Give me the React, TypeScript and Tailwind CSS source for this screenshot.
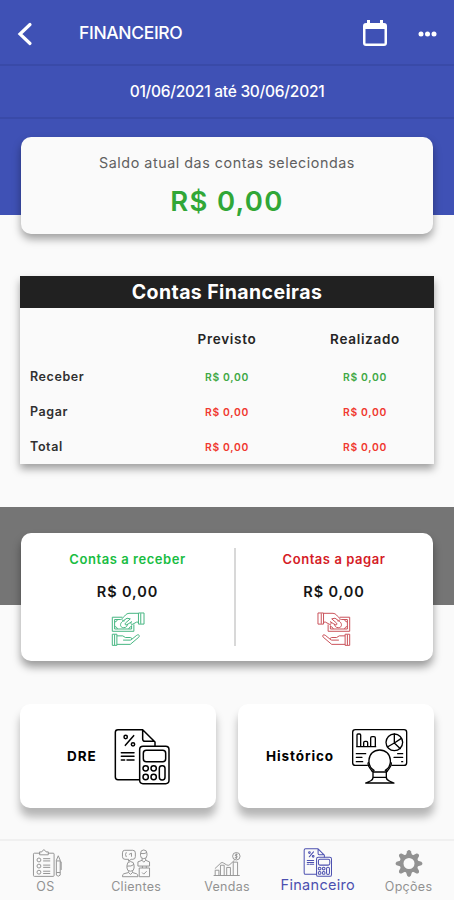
import { FC, ReactNode } from 'react'

type RowType = {
  label: string
  color: string
}

const rows: RowType[] = [
  { label: 'Receber', color: 'text-[#3fa845]' },
  { label: 'Pagar', color: 'text-[#f0382f]' },
  { label: 'Total', color: 'text-[#f0382f]' },
]

const ReportIcon: FC<{ className: string; strokeWidth?: number }> = ({
  className,
  strokeWidth = 4.5,
}) => (
  <svg
    className={className}
    viewBox="27 21 171 171"
    fill="none"
    stroke="currentColor"
    strokeWidth={strokeWidth}
    strokeLinecap="round"
    strokeLinejoin="round"
  >
    <path d="M103 176H39q-8 0-8-8V34q0-8 8-8h74l37 37v11M113 26v28q0 7 7 7h28" />
    <circle cx="62" cy="48" r="5" />
    <circle cx="84" cy="70" r="5" />
    <path d="M86 44 61 73" />
    <path d="M49 95h38M49 106h38M49 117h10M66 117h21" />
    <rect x="104" y="76" width="88" height="112" rx="10" />
    <rect x="115" y="88" width="67" height="34" rx="9" />
    <circle cx="122" cy="142" r="8" />
    <circle cx="146" cy="142" r="8" />
    <circle cx="122" cy="168" r="8" />
    <circle cx="146" cy="168" r="8" />
    <rect x="163" y="134" width="17" height="43" rx="8" />
  </svg>
)

const HistoryIcon: FC = () => (
  <svg
    className="h-[57px] w-[57px] text-black"
    viewBox="33 21 171 171"
    fill="none"
    stroke="currentColor"
    strokeWidth="4"
    strokeLinecap="round"
    strokeLinejoin="round"
  >
    <path d="M82 133H46q-8 0-8-8V34q0-8 8-8h146q8 0 8 8v91q0 8-8 8h-36" />
    <path d="M51 77V42q0-3 3-3h5q3 0 3 3v35M71 77V65q0-4 4-4h4q4 0 4 4v12M92 77V51q0-4 4-4h6q4 0 4 4v26M50 77h57" />
    <circle cx="163" cy="64" r="25" />
    <path d="M163 39v27l-21 12M163 66l21-14M163 66l18 17" />
    <path d="M49 98h28M49 109h17M49 122h19M173 98h15M162 109h26M185 122h3" />
    <path d="M102 148c-12-7-16-18-15-31 1-18 14-30 32-30s31 12 32 30c1 13-3 24-15 31" />
    <path d="M85 125c-5 10 7 17 12 27M153 125c5 10-7 17-12 27" />
    <path d="M100 153h38M100 169h38M99 149v20q0 8-8 11l-14 6h85l-14-6q-9-3-9-11v-20" />
  </svg>
)

const MoneyIcon: FC<{ className: string }> = ({ className }) => (
  <svg
    className={className}
    viewBox="33 19 102 104"
    fill="none"
    stroke="currentColor"
    strokeWidth="3"
    strokeLinejoin="round"
  >
    <path d="M67 35H36v43h66V57M62 42H43v29h52V60M43 50q7-1 9-8M43 63q7 1 9 8M95 63q-7 1-9 8" />
    <path d="M74 46c-15 1-18 21-3 21 8 0 12-6 11-12" />
    <path d="M115 23H87c-9 0-13 9-20 15-5 4 0 9 5 6l9-6 10 2-15 13c-3 4 1 7 5 5l15-10M94 51c-3 5 1 8 5 5l11-6h6" />
    <path d="M116 22h17v34h-17zM123 23v32" />
    <path d="M36 87h14v34H36zM43 88v32M50 92h18l8 5h15c6 0 6 8 0 8H69M95 103l16-13c6-4 10 2 6 6l-26 22H50" />
  </svg>
)

const OrdersIcon: FC = () => (
  <svg
    className="ml-[3px] h-[29px] w-[30px]"
    viewBox="0 0 90 90"
    fill="none"
    stroke="currentColor"
    strokeWidth="3"
    strokeLinejoin="round"
  >
    <path d="M24 13H6q-3 0-3 3v66q0 3 3 3h58q3 0 3-3V16q0-3-3-3H48M22 18V9h7q6-13 13 0h7v9z" />
    <circle cx="20" cy="34" r="6" />
    <circle cx="20" cy="53" r="6" />
    <circle cx="20" cy="72" r="6" />
    <path d="M33 30h22M33 37h22M33 50h22M33 57h22M33 69h22M33 76h22" />
    <path d="M74 81V35l6-14 6 14v46q-6 7-12 0zM74 37h12M74 73h12M86 40h3v25" />
  </svg>
)

const ClientsIcon: FC = () => (
  <svg
    className="h-[29px] w-[30px]"
    viewBox="0 0 90 90"
    fill="none"
    stroke="currentColor"
    strokeWidth="3"
    strokeLinejoin="round"
  >
    <path d="M10 4h25q8 0 8 8v12q0 8-8 8h-5l-8 6v-6H11q-8 0-8-8V12q0-8 7-8zM15 10q-5 7 0 15M23 17l8-4v11" />
    <path d="M59 14q0-11 10-11t10 11v6q0 10-10 10t-10-10zM59 14q12 2 20-3M64 29v6l-13 5v13h36V40l-12-5v-6M64 35l5 6 6-6" />
    <path d="M17 51q0-12 11-12t11 12v8q0 10-11 10T17 59zM17 53q13 2 22-5M22 69v4L7 77q-4 1-4 9h48q0-8-4-9l-13-4v-4M22 73l6 6 6-6" />
    <path d="M55 59h32v27H55zM65 59v-6M77 59v-6M64 73l5 5 9-9" />
  </svg>
)

const SalesIcon: FC = () => (
  <svg
    className="mt-px h-[28px] w-[28px]"
    viewBox="0 0 90 90"
    fill="none"
    stroke="currentColor"
    strokeWidth="3"
    strokeLinejoin="round"
  >
    <path d="M2 82h84M7 82V65h12v17M24 82V49h12v33M44 82V56h12v26M65 82V39h14v43" />
    <path d="M6 60 25 42q4-4 9 0l10 6q5 3 10-1l15-14" />
    <circle cx="75" cy="20" r="12" />
    <path d="M79 15q-7-3-8 2l7 4q1 5-8 4M75 11v18" />
  </svg>
)

const GearIcon: FC = () => (
  <svg className="h-[29px] w-[30px]" viewBox="-15 -15 30 30" fill="currentColor">
    {[0, 45, 90, 135, 180, 225, 270, 315].map((angle) => (
      <path
        key={angle}
        d="M-3.2-8.5 -1.9-12.8Q0-15 1.9-12.8L3.2-8.5Z"
        transform={`rotate(${angle})`}
      />
    ))}
    <circle r="7.7" fill="none" stroke="currentColor" strokeWidth="4" />
  </svg>
)

const AccountSummary: FC<{
  title: string
  titleClass: string
  children: ReactNode
}> = ({ title, titleClass, children }) => (
  <div className="flex flex-col items-center pt-[16px]">
    <span className={titleClass}>{title}</span>
    <span className="mt-[13px] text-[14.5px] leading-5 font-semibold tracking-[0.9px] text-[#151515]">
      R$ 0,00
    </span>
    {children}
  </div>
)

const NavItem: FC<{ label: string; children: ReactNode }> = ({
  label,
  children,
}) => (
  <div className="flex flex-col items-center pt-[8px] text-[#929292]">
    {children}
    <span className="mt-px text-[12.5px] leading-4 tracking-[0.3px]">
      {label}
    </span>
  </div>
)

const App: FC = () => {
  return (
    <div className="flex h-[900px] w-[454px] flex-col overflow-hidden bg-[#fafafa] font-['Inter',sans-serif]">
      <header className="flex h-16 shrink-0 items-center bg-[#3f51b5] pt-[3px] text-white">
        <svg
          className="ml-[17px] h-6 w-4"
          viewBox="0 0 16 24"
          fill="none"
          stroke="currentColor"
          strokeWidth="3.2"
          strokeLinecap="round"
        >
          <path d="M13 2.5 3 12l10 9.500" />
        </svg>
        <h1 className="ml-[46px] text-[17.5px] font-medium tracking-[-0.35px]">
          FINANCEIRO
        </h1>
        <svg
          className="ml-auto h-[27px] w-6"
          viewBox="0 0 24 27"
          fill="currentColor"
        >
          <path d="M4 0h3v3h10V0h3v3h1q3 0 3 3v17q0 3-3 3H3q-3 0-3-3V6q0-3 3-3h1zM2.500 9v14.500h19V9z" />
        </svg>
        <svg
          className="mr-[17px] ml-[31px] h-6 w-[19px]"
          viewBox="0 0 19 24"
          fill="currentColor"
        >
          <circle cx="3" cy="12" r="2.5" />
          <circle cx="9.5" cy="12" r="2.5" />
          <circle cx="16" cy="12" r="2.5" />
        </svg>
      </header>

      <div className="flex h-[53px] shrink-0 items-center justify-center border-t-2 border-[#394aa8] bg-[#3f51b5] text-[15.5px] font-medium tracking-[-0.25px] text-white">
        01/06/2021 até 30/06/2021
      </div>

      <section className="h-[98px] shrink-0 border-t-2 border-[#394aa8] bg-[#3f51b5] px-[21px] pt-[18px]">
        <div className="flex h-[97px] flex-col items-center rounded-[10px] bg-[#fafafa] pt-[16px] shadow-[0_5px_8px_rgba(0,0,0,0.36)]">
          <span className="text-[14.3px] leading-5 tracking-[0.55px] text-[#606060]">
            Saldo atual das contas seleciondas
          </span>
          <span className="mt-[12px] text-[27.5px] leading-8 font-semibold tracking-[1.3px] text-[#31a737]">
            R$ 0,00
          </span>
        </div>
      </section>

      <section className="mx-5 mt-[61px] h-[188px] shrink-0 bg-[#fafafa] shadow-[0_5px_8px_rgba(0,0,0,0.36)]">
        <h2 className="flex h-8 items-center justify-center bg-[#212121] pt-px text-[19.5px] font-bold tracking-[0.4px] text-white">
          Contas Financeiras
        </h2>
        <div className="grid h-[61px] grid-cols-3 items-center pt-px text-center text-[13.5px] font-semibold tracking-[0.7px] text-[#252525]">
          <span className="col-start-2">Previsto</span>
          <span>Realizado</span>
        </div>
        {rows.map(({ label, color }) => (
          <div
            key={label}
            className="grid h-[35px] grid-cols-3 items-start text-center"
          >
            <span className="pl-[10px] text-left text-[12.5px] leading-4 font-semibold tracking-[0.6px] text-[#303030]">
              {label}
            </span>
            <span
              className={`text-[10.3px] leading-4 font-semibold tracking-[0.7px] ${color}`}
            >
              R$ 0,00
            </span>
            <span
              className={`text-[10.3px] leading-4 font-semibold tracking-[0.7px] ${color}`}
            >
              R$ 0,00
            </span>
          </div>
        ))}
      </section>

      <section className="mt-[43px] h-[98px] shrink-0 bg-[#757575] px-[21px] pt-[26px]">
        <div className="grid h-[128px] grid-cols-[213px_1px_198px] rounded-[10px] bg-white shadow-[0_6px_9px_rgba(0,0,0,0.38)]">
          <AccountSummary
            title="Contas a receber"
            titleClass="text-[13px] leading-5 font-semibold tracking-[0.55px] text-[#18bd42]"
          >
            <MoneyIcon className="mt-[10px] h-[34px] w-[34px] text-[#43b580]" />
          </AccountSummary>
          <div className="mt-[15px] h-[98px] w-[1.5px] bg-[#d8d8d8]" />
          <AccountSummary
            title="Contas a pagar"
            titleClass="text-[13px] leading-5 font-semibold tracking-[0.55px] text-[#d51c26]"
          >
            <MoneyIcon className="mt-[10px] h-[34px] w-[34px] -scale-x-100 text-[#c95058]" />
          </AccountSummary>
        </div>
      </section>

      <section className="mt-[99px] grid shrink-0 grid-cols-2 gap-[22px] px-5">
        <div className="flex h-[104px] items-center rounded-[10px] bg-white pl-[47px] shadow-[0_9px_9px_rgba(0,0,0,0.28)]">
          <span className="w-[47px] text-[13.5px] font-bold tracking-[0.9px] text-black">
            DRE
          </span>
          <ReportIcon className="h-[57px] w-[57px] text-black" />
        </div>
        <div className="flex h-[104px] items-center rounded-[10px] bg-white pl-[28px] shadow-[0_9px_9px_rgba(0,0,0,0.28)]">
          <span className="w-[85px] text-[13.5px] font-bold tracking-[0.9px] text-black">
            Histórico
          </span>
          <HistoryIcon />
        </div>
      </section>

      <nav className="mt-auto grid h-[61px] shrink-0 grid-cols-5 border-t-2 border-[#f0f0f0] bg-[#fafafa]">
        <NavItem label="OS">
          <OrdersIcon />
        </NavItem>
        <NavItem label="Clientes">
          <ClientsIcon />
        </NavItem>
        <NavItem label="Vendas">
          <SalesIcon />
        </NavItem>
        <div className="flex flex-col items-center pt-[7px] text-[#4c50b0]">
          <ReportIcon className="h-[29px] w-[30px]" strokeWidth={6} />
          <span className="text-[14.5px] leading-4 tracking-[0.3px]">
            Financeiro
          </span>
        </div>
        <NavItem label="Opções">
          <GearIcon />
        </NavItem>
      </nav>
    </div>
  )
}

export default App
